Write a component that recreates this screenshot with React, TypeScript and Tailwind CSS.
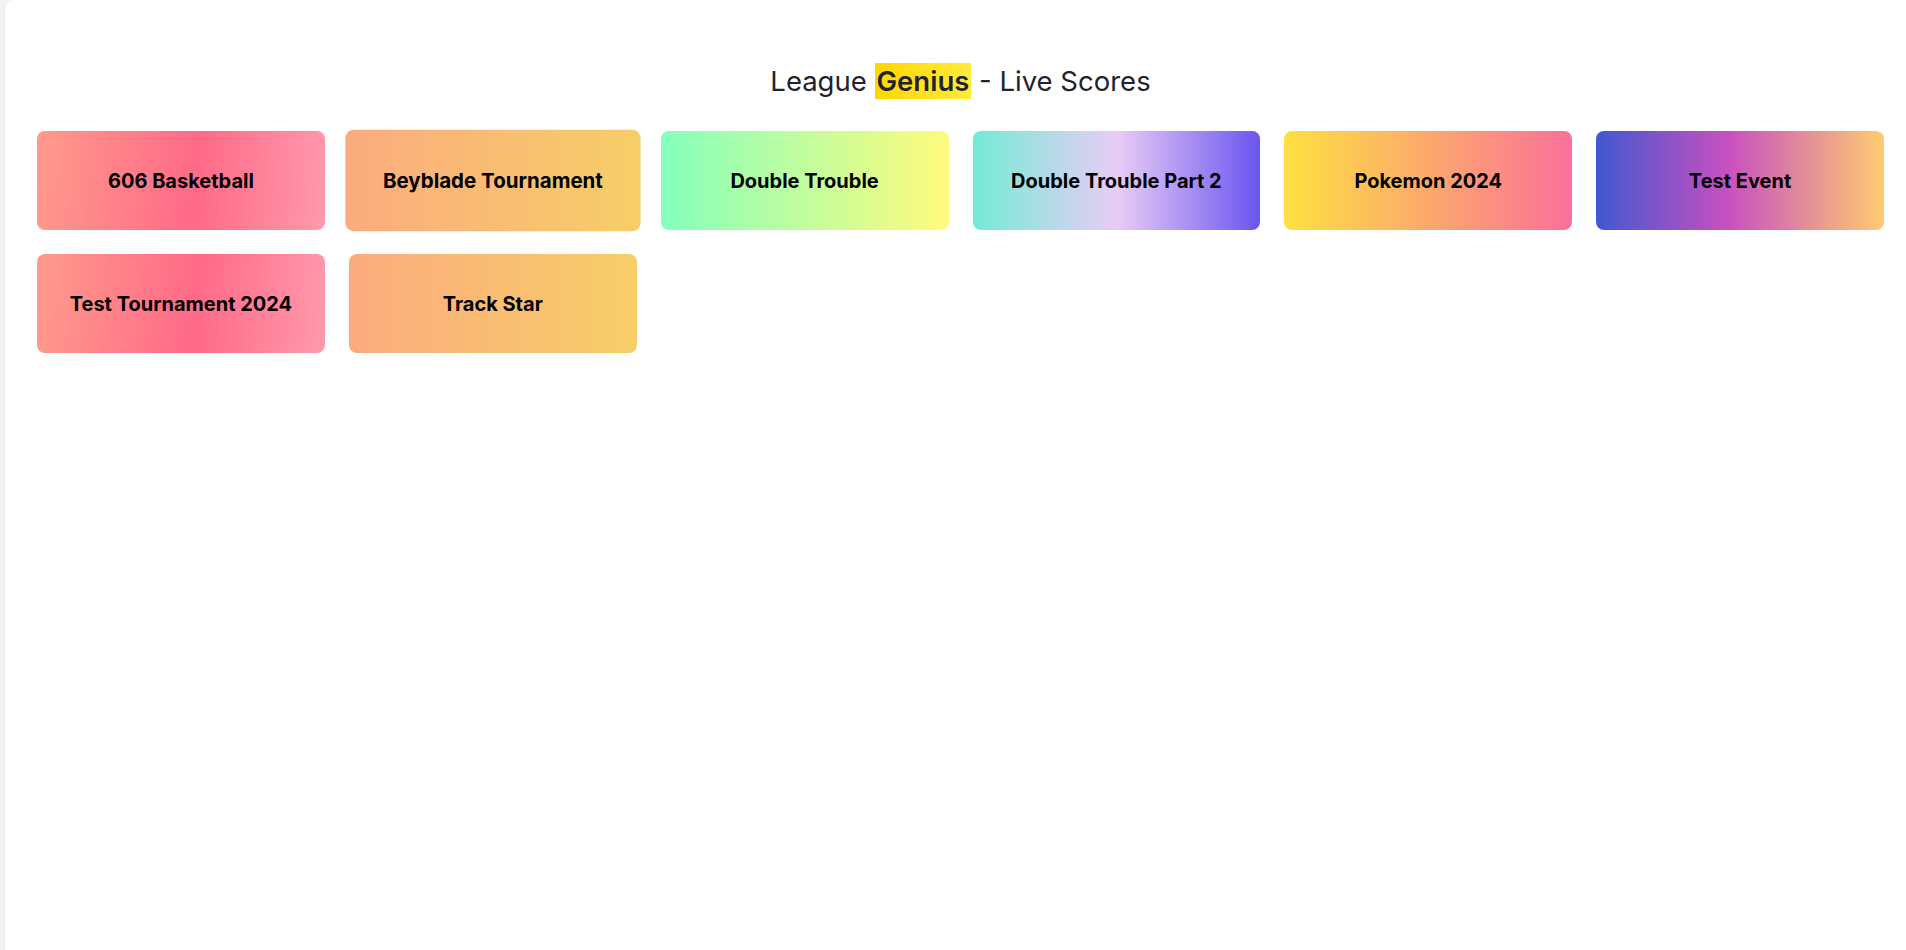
import React from 'react';

type Event = { name: string; bg: string; hover?: boolean };

const events: Event[] = [
  { name: '606 Basketball', bg: 'bg-[linear-gradient(95deg,#ff9a8b_0%,#ff6a88_55%,#ff99ac_100%)]' },
  { name: 'Beyblade Tournament', bg: 'bg-[linear-gradient(90deg,#fbab7e_0%,#f7ce68_100%)]', hover: true },
  { name: 'Double Trouble', bg: 'bg-[linear-gradient(90deg,#85ffbd_0%,#fffb7d_100%)]' },
  { name: 'Double Trouble Part 2', bg: 'bg-[linear-gradient(90deg,#74ebd5_0%,#e9ccf6_50%,#6a55f0_100%)]' },
  { name: 'Pokemon 2024', bg: 'bg-[linear-gradient(90deg,#fee140_0%,#fa709a_100%)]' },
  { name: 'Test Event', bg: 'bg-[linear-gradient(90deg,#4158d0_0%,#c850c0_46%,#ffcc70_100%)]' },
  { name: 'Test Tournament 2024', bg: 'bg-[linear-gradient(95deg,#ff9a8b_0%,#ff6a88_55%,#ff99ac_100%)]' },
  { name: 'Track Star', bg: 'bg-[linear-gradient(90deg,#fbab7e_0%,#f7ce68_100%)]' },
];

export default function App() {
  return (
    <div className="min-h-screen w-full overflow-hidden bg-[#f3f3f3] pl-1 font-['Inter',sans-serif]">
      <div className="min-h-[950px] w-[1912px] rounded-tl-lg border-l border-[#ececec] bg-white px-8 pt-[63px]">
        <h1 className="mb-[32px] text-center text-[27.5px] leading-9 font-normal text-[#1f2330]">
          League{' '}
          <span className="bg-[linear-gradient(90deg,#ffd700,#ffeb3b)] px-0.5 py-px font-semibold">Genius</span>{' '}
          - Live Scores
        </h1>

        {/* Events */}
        <div className="grid grid-cols-6 gap-6">
          {events.map((e) => (
            <div
              key={e.name}
              className={`flex h-[99px] items-center justify-center rounded-lg ${e.bg} ${e.hover ? 'scale-[1.025]' : ''}`}
            >
              <span className="text-xl font-bold text-black">{e.name}</span>
            </div>
          ))}
        </div>
      </div>
    </div>
  );
}
